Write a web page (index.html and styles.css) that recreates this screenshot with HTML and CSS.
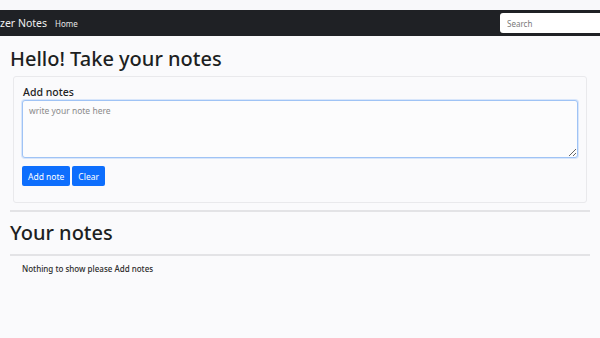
FILE: index.html
```html
<!DOCTYPE html>
<html>
<head>
<meta charset="utf-8">
<link rel="stylesheet" href="styles.css">
</head>
<body>
<div class="topstrip"></div>
<nav class="navbar">
  <span class="brand">zer Notes</span>
  <a class="navlink" href="#">Home</a>
  <span class="spacer"></span>
  <input class="search" type="text" placeholder="Search">
</nav>
<main class="container">
  <h1 class="title">Hello! Take your notes</h1>
  <section class="card">
    <h5 class="card-title">Add notes</h5>
    <textarea class="note-input" placeholder="write your note here"></textarea>
    <div class="btns">
      <button class="btn">Add note</button>
      <button class="btn">Clear</button>
    </div>
  </section>
  <hr class="rule">
  <h1 class="title second">Your notes</h1>
  <hr class="rule thin">
  <p class="empty">Nothing to show please Add notes</p>
</main>
</body>
</html>
```

FILE: styles.css
```css
html, body {
  margin: 0;
  padding: 0;
  background: #fafafc;
  font-family: "Noto Sans", "Open Sans", sans-serif;
  color: #212529;
  overflow: hidden;
  height: 338px;
}
.topstrip {
  height: 10px;
  background: #f8f8fa;
}
.navbar {
  height: 26px;
  background: #1f2125;
  display: flex;
  align-items: center;
  overflow: hidden;
}
.brand {
  color: #f0f0f0;
  font-size: 10.5px;
  margin-left: 0;
  white-space: nowrap;
}
.navlink {
  color: #e6e6e6;
  font-size: 8px;
  text-decoration: none;
  margin-left: 8px;
}
.spacer { flex: 1; }
.search {
  width: 110px;
  height: 20px;
  box-sizing: border-box;
  border: none;
  border-radius: 3px 0 0 3px;
  margin-right: -10px;
  padding: 0 7px;
  font-family: inherit;
  font-size: 8px;
  background: #fff;
  outline: none;
}
.search::placeholder { color: #7a7a7a; }
.container {
  padding: 0 10px;
}
.title {
  margin: 10px 0 0 0;
  font-weight: 500;
  font-size: 20px;
  line-height: 26px;
  color: #1d1f22;
}
.card {
  margin: 4px 3px 0 3px;
  border: 1px solid #e9e9ec;
  border-radius: 3px;
  padding: 8px 8px 16px 8px;
  background: #fafafc;
}
.card-title {
  margin: 0 0 1px 1px;
  font-size: 10.5px;
  font-weight: 500;
  line-height: 14px;
  color: #222;
}
.note-input {
  display: block;
  width: 100%;
  box-sizing: border-box;
  height: 58px;
  border: 1.5px solid #9fc3f5;
  border-radius: 3px;
  box-shadow: 0 0 0 1px #d8e6fb;
  background: #fcfcfd;
  font-family: inherit;
  font-size: 8.5px;
  padding: 4px 6px;
  resize: vertical;
  outline: none;
}
.note-input::placeholder { color: #8a8a8a; }
.btns {
  display: flex;
  gap: 2px;
  margin-top: 8px;
}
.btn {
  background: #0d6efd;
  color: #fff;
  border: none;
  border-radius: 2px;
  height: 20px;
  padding: 0 6px;
  font-family: inherit;
  font-size: 8.5px;
}
.rule {
  margin: 7px 0 0 0;
  border: none;
  border-top: 2px solid #e3e3e6;
}
.second {
  margin-top: 8px;
}
.rule.thin {
  margin-top: 8px;
}
.empty {
  margin: 7px 0 0 12px;
  font-size: 8px;
  font-weight: 500;
  color: #2a2a2a;
}
```
